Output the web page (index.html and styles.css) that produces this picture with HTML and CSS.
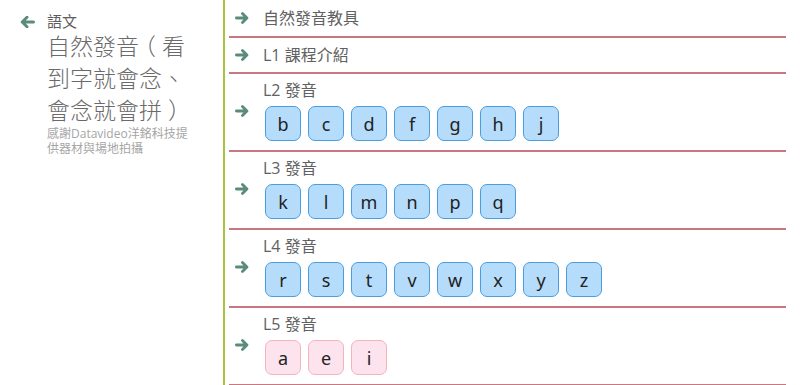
FILE: index.html
```html
<!DOCTYPE html>
<html lang="zh-Hant">
<head>
  <meta charset="UTF-8">
  <meta name="viewport" content="width=device-width, initial-scale=1.0">
  <title>自然發音</title>
  <link rel="stylesheet" href="styles.css">
</head>
<body>
  <aside class="sidebar">
    <svg class="back-icon" viewBox="0 0 15 12" aria-hidden="true">
      <path d="M13.5 6 H3 M7 1.2 L2.2 6 L7 10.8"/>
    </svg>
    <div class="sidebar-text">
      <div class="category">語文</div>
      <h1 class="course-title">自然發音<span class="paren-open">（</span>看到字就會念、會念就會拼<span class="paren-close">）</span></h1>
      <p class="credit">感謝Datavideo洋銘科技提供器材與場地拍攝</p>
    </div>
  </aside>

  <main class="lessons">
    <div class="row row-short">
      <svg class="arrow" viewBox="0 0 15 12"><path d="M1.5 6 H12 M8 1.2 L12.8 6 L8 10.8"/></svg>
      <div class="row-body"><div class="label">自然發音教具</div></div>
    </div>

    <div class="row row-short row-l1">
      <svg class="arrow" viewBox="0 0 15 12"><path d="M1.5 6 H12 M8 1.2 L12.8 6 L8 10.8"/></svg>
      <div class="row-body"><div class="label">L1 課程介紹</div></div>
    </div>

    <div class="row">
      <svg class="arrow" viewBox="0 0 15 12"><path d="M1.5 6 H12 M8 1.2 L12.8 6 L8 10.8"/></svg>
      <div class="row-body">
        <div class="label">L2 發音</div>
        <div class="letters">
          <span class="letter">b</span><span class="letter">c</span><span class="letter">d</span><span class="letter">f</span><span class="letter">g</span><span class="letter">h</span><span class="letter">j</span>
        </div>
      </div>
    </div>

    <div class="row">
      <svg class="arrow" viewBox="0 0 15 12"><path d="M1.5 6 H12 M8 1.2 L12.8 6 L8 10.8"/></svg>
      <div class="row-body">
        <div class="label">L3 發音</div>
        <div class="letters">
          <span class="letter">k</span><span class="letter">l</span><span class="letter">m</span><span class="letter">n</span><span class="letter">p</span><span class="letter">q</span>
        </div>
      </div>
    </div>

    <div class="row">
      <svg class="arrow" viewBox="0 0 15 12"><path d="M1.5 6 H12 M8 1.2 L12.8 6 L8 10.8"/></svg>
      <div class="row-body">
        <div class="label">L4 發音</div>
        <div class="letters">
          <span class="letter">r</span><span class="letter">s</span><span class="letter">t</span><span class="letter">v</span><span class="letter">w</span><span class="letter">x</span><span class="letter">y</span><span class="letter">z</span>
        </div>
      </div>
    </div>

    <div class="row">
      <svg class="arrow" viewBox="0 0 15 12"><path d="M1.5 6 H12 M8 1.2 L12.8 6 L8 10.8"/></svg>
      <div class="row-body">
        <div class="label">L5 發音</div>
        <div class="letters">
          <span class="letter vowel">a</span><span class="letter vowel">e</span><span class="letter vowel">i</span>
        </div>
      </div>
    </div>
  </main>
</body>
</html>
```

FILE: styles.css
```css
* {
  margin: 0;
  padding: 0;
  box-sizing: border-box;
}

body {
  font-family: 'Open Sans', 'Noto Sans CJK TC', sans-serif;
  background: #fff;
  color: #555;
  display: flex;
  height: 385px;
  overflow: hidden;
}

/* left column */
.sidebar {
  width: 225px;
  flex-shrink: 0;
  display: flex;
  gap: 12px;
  padding: 11px 0 0 20px;
  border-right: 2px solid #a8c23c;
}

.back-icon {
  width: 15px;
  height: 12px;
  margin-top: 5px;
  flex-shrink: 0;
  fill: none;
  stroke: #5b8c7b;
  stroke-width: 3;
  stroke-linecap: round;
  stroke-linejoin: round;
}

.sidebar-text {
  width: 141px;
}

.category {
  font-size: 15px;
  line-height: 20px;
  color: #5e5e5e;
}

.course-title {
  font-size: 23px;
  font-weight: 300;
  line-height: 32px;
  color: #6a6a6a;
  margin-top: -1px;
}

/* centre the full-width brackets in their cell */
.paren-open,
.paren-close {
  display: inline-block;
}

.paren-open {
  transform: translateX(-6px);
}

.paren-close {
  transform: translateX(6px);
}

.credit {
  font-size: 12px;
  line-height: 15px;
  color: #a6a6a6;
}

/* lesson list */
.lessons {
  flex: 1;
  margin: 0 14px 0 4px;
}

.row {
  display: flex;
  align-items: center;
  gap: 14px;
  padding: 6px 0 9px 6px;
  border-bottom: 2px solid #c9787f;
}

.row-short {
  height: 38px;
  padding: 0 0 0 6px;
}

.row-l1 {
  height: 36px;
}

.arrow {
  width: 14px;
  height: 12px;
  flex-shrink: 0;
  fill: none;
  stroke: #5b8c7b;
  stroke-width: 3;
  stroke-linecap: round;
  stroke-linejoin: round;
}

.label {
  font-size: 16px;
  line-height: 20px;
  color: #616161;
}

.letters {
  display: flex;
  gap: 7px;
  margin: 6px 0 0 2px;
}

.letter {
  width: 36px;
  height: 35px;
  display: flex;
  align-items: center;
  justify-content: center;
  font-family: 'Noto Sans', sans-serif;
  font-size: 18px;
  color: #222;
  background: #b5dcfa;
  border: 1px solid #4a9ee0;
  border-radius: 7px;
}

.vowel {
  background: #fde3ee;
  border-color: #f5b3ba;
}
```
